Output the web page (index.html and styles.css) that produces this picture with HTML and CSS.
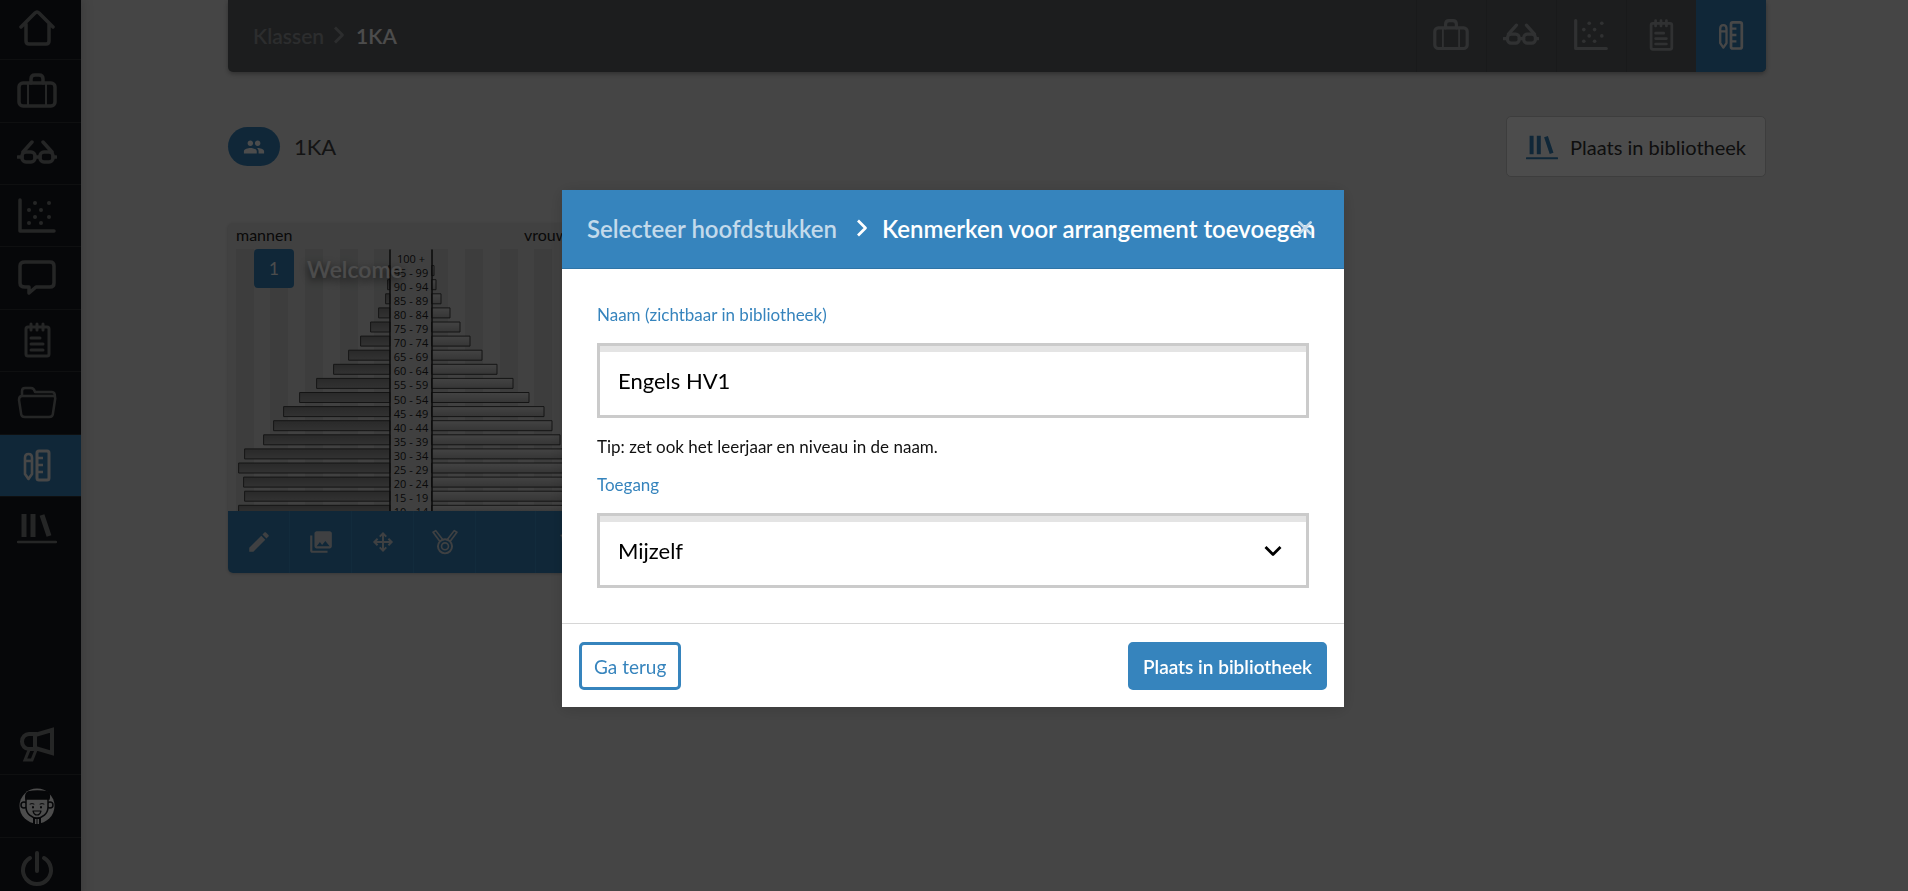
FILE: index.html
```html
<!DOCTYPE html>
<html lang="nl">
<head>
  <meta charset="UTF-8">
  <meta name="viewport" content="width=device-width, initial-scale=1">
  <title>1KA - Plaats in bibliotheek</title>
  <link rel="stylesheet" href="styles.css">
</head>
<body>
  <!-- Icons -->
  <svg class="sprite" aria-hidden="true">
    <symbol id="home" viewBox="0 0 40 40"><path d="M4 18 18 4q2-2 4 0l14 14M9 15v17q0 3 3 3h17q3 0 3-3V15"/></symbol>
    <symbol id="case" viewBox="0 0 40 40"><rect x="2" y="12" width="36" height="23" rx="4"/><path d="M14 12V8q0-4 4-4h4q4 0 4 4v4"/><path stroke-width="2" d="M11 13v22M29 13v22"/></symbol>
    <symbol id="glasses" viewBox="0 0 40 40"><rect x="5" y="19" width="13" height="10" rx="4"/><rect x="23" y="19" width="13" height="10" rx="4"/><path d="M1 24h4M18 24h5M36 24h3M6 19l9-10M26 9l9 10"/></symbol>
    <symbol id="chart" viewBox="0 0 40 40"><path d="M3 4v31h34"/><g fill="currentColor" stroke="none"><circle cx="18" cy="7" r="2"/><circle cx="32" cy="7" r="2"/><circle cx="12" cy="14" r="2"/><circle cx="24" cy="14" r="2"/><circle cx="18" cy="21" r="2"/><circle cx="32" cy="21" r="2"/><circle cx="12" cy="27" r="2"/><circle cx="24" cy="27" r="2"/></g></symbol>
    <symbol id="chat" viewBox="0 0 40 40"><path d="M8 4h25q4 0 4 4v17q0 4-4 4H19l-7 6v-6H8q-5 0-5-4V8q0-4 5-4Z"/></symbol>
    <symbol id="note" viewBox="0 0 40 40"><rect x="9" y="7" width="23" height="29" rx="2" stroke-width="3"/><path stroke-width="3" d="M14 4v6M20 4v6M26 4v6M14 18h9M14 24h12M14 30h12"/></symbol>
    <symbol id="folder" viewBox="0 0 40 40"><path stroke-width="2.5" d="M5 13V8q0-3 3-3h6q3 0 4 4h17q3 0 3 5M5 13h31q3 0 2 4l-2 13q0 4-4 4H8q-4 0-4-4L2 17q0-4 3-4Z"/></symbol>
    <symbol id="tools" viewBox="0 0 40 40"><path stroke-width="2.6" d="M8 13q0-4 3.500-4t3.500 4v16l-3.500 5L8 29ZM8 16h7"/><rect stroke-width="3" x="20" y="6" width="12" height="29" rx="2"/><path stroke-width="2.600" stroke-linecap="butt" d="M20 13h6M20 20h6M20 27h6"/></symbol>
    <symbol id="books" viewBox="0 0 40 40"><path stroke-width="5" stroke-linecap="butt" d="M7 6v23M16 6v23M25 7l7 21"/><path stroke-width="2.5" d="M1 34h38"/></symbol>
    <symbol id="horn" viewBox="0 0 40 40"><path stroke-width="4" stroke-linecap="butt" stroke-linejoin="miter" d="M18 10h-6a7 7.500 0 0 0 0 15h6ZM18 11l17-5v23l-17-5"/><path stroke-width="3" stroke-linejoin="miter" d="m12 26-4 10h7l4-10"/></symbol>
    <symbol id="power" viewBox="0 0 40 40"><path stroke-width="4" d="M13 9a14 14 0 1 0 14 0M20 4v18"/></symbol>
    <symbol id="avatar" viewBox="0 0 40 40">
      <circle cx="20" cy="20" r="17.500" fill="#fff" stroke="none"/>
      <g stroke="#17181e" stroke-width="1.500" fill="#fff">
        <circle cx="7" cy="19" r="3"/><circle cx="33" cy="19" r="3"/>
        <path stroke="none" fill="#17181e" d="M16 30h8v8h-8Z"/>
        <path stroke="none" d="M18 33h1.500v5H18ZM20.500 33H22v5h-1.500Z"/>
        <path d="M9 12v9c0 7 6 11 11 11s11-4 11-11v-9Z"/>
        <path fill="#17181e" d="M9 13q-1-5 2-7 9-2 20 0 2 2 1 7Z"/>
        <path stroke-width="1" d="M13 18q2-1 4 0M23 18q2-1 4 0"/>
        <path fill="none" stroke-width="2" d="M16 21v.5M24 21v.5"/>
        <path stroke-width="1.200" d="M16 25h8q-1 4-4 4t-4-4Z"/>
      </g>
    </symbol>
    <symbol id="people" viewBox="0 0 24 24"><path fill="currentColor" stroke="none" d="M16 11c1.700 0 3-1.300 3-3s-1.300-3-3-3-3 1.300-3 3 1.300 3 3 3ZM8 11c1.700 0 3-1.300 3-3S9.700 5 8 5 5 6.300 5 8s1.300 3 3 3ZM8 13c-2.300 0-7 1.200-7 3.500V19h14v-2.500C15 14.200 10.300 13 8 13ZM16 13h-1c1.200.8 2 2 2 3.500V19h6v-2.500c0-2.300-4.700-3.500-7-3.500Z"/></symbol>
    <symbol id="pencil" viewBox="0 0 24 24"><path fill="currentColor" stroke="none" d="M3 17.200V21h3.800L17.800 9.900l-3.700-3.700ZM20.700 7c.4-.4.4-1 0-1.400l-2.300-2.300c-.4-.4-1-.4-1.400 0l-1.800 1.800 3.700 3.700Z"/></symbol>
    <symbol id="images" viewBox="0 0 24 24"><path fill="currentColor" stroke="none" d="M22 16V4c0-1.100-.9-2-2-2H8c-1.100 0-2 .9-2 2v12c0 1.100.9 2 2 2h12c1.100 0 2-.9 2-2Zm-11-4 2 2.700 3-3.700 4 5H8ZM2 6v14c0 1.100.9 2 2 2h14v-2H4V6Z"/></symbol>
    <symbol id="move" viewBox="0 0 24 24"><path stroke-width="1.800" stroke-linecap="butt" stroke-linejoin="miter" d="M12 4v16M4 12h16M9 7l3-3 3 3M9 17l3 3 3-3M7 9l-3 3 3 3M17 9l3 3-3 3"/></symbol>
    <symbol id="medal" viewBox="0 0 24 24"><path stroke-width="1.500" d="m1 3 2.500-1.500L10 10M1 3l6 8M23 3l-2.500-1.500L14 10M23 3l-6 8"/><circle cx="12" cy="16" r="6.500" stroke-width="1.800"/><circle cx="12" cy="16" r="3.200" stroke-width="1.500"/></symbol>
    <symbol id="trash" viewBox="0 0 24 24"><path stroke-width="2" d="M6 6h12M9 6V3h6v3M7 6l1 15h8l1-15"/></symbol>
    <symbol id="chevron" viewBox="0 0 16 16"><path stroke-width="2.200" stroke-linecap="butt" d="m4 2 6 6-6 6"/></symbol>
    <symbol id="cross" viewBox="0 0 16 16"><path stroke-width="2.500" d="m3 3 10 10M13 3 3 13"/></symbol>
  </svg>

  <div class="app">
    <nav class="sidebar">
      <a href="#" aria-label="Home"><svg class="icon"><use href="#home"/></svg></a>
      <a href="#" aria-label="Vakken"><svg class="icon"><use href="#case"/></svg></a>
      <a href="#" aria-label="Nakijken"><svg class="icon"><use href="#glasses"/></svg></a>
      <a href="#" aria-label="Resultaten"><svg class="icon"><use href="#chart"/></svg></a>
      <a href="#" aria-label="Berichten"><svg class="icon"><use href="#chat"/></svg></a>
      <a href="#" aria-label="Planning"><svg class="icon"><use href="#note"/></svg></a>
      <a href="#" aria-label="Bestanden"><svg class="icon"><use href="#folder"/></svg></a>
      <a href="#" aria-label="Arrangeren" class="active"><svg class="icon"><use href="#tools"/></svg></a>
      <a href="#" aria-label="Bibliotheek" class="last"><svg class="icon"><use href="#books"/></svg></a>
      <a href="#" aria-label="Nieuws" class="bottom"><svg class="icon"><use href="#horn"/></svg></a>
      <a href="#" aria-label="Profiel"><svg class="icon"><use href="#avatar"/></svg></a>
      <a href="#" aria-label="Uitloggen" class="last"><svg class="icon"><use href="#power"/></svg></a>
    </nav>

    <main class="page">
      <header class="topbar">
        <div class="crumbs">
          <a href="#">Klassen</a>
          <svg class="chevron"><use href="#chevron"/></svg>
          <strong>1KA</strong>
        </div>
        <nav class="tabs">
          <a href="#" aria-label="Vakken"><svg class="icon"><use href="#case"/></svg></a>
          <a href="#" aria-label="Nakijken"><svg class="icon"><use href="#glasses"/></svg></a>
          <a href="#" aria-label="Resultaten"><svg class="icon"><use href="#chart"/></svg></a>
          <a href="#" aria-label="Planning"><svg class="icon"><use href="#note"/></svg></a>
          <a href="#" aria-label="Arrangeren" class="active"><svg class="icon"><use href="#tools"/></svg></a>
        </nav>
      </header>

      <div class="title-row">
        <span class="pill"><svg><use href="#people"/></svg></span>
        <h1>1KA</h1>
        <button class="library" type="button"><svg><use href="#books"/></svg>Plaats in bibliotheek</button>
      </div>

      <article class="card">
        <div class="cover">
          <svg id="pyramid" viewBox="0 0 372 288" aria-hidden="true">
            <defs>
              <linearGradient id="men" x2="0" y2="1"><stop stop-color="#8a8a8a"/><stop offset="1" stop-color="#a8a8a8"/></linearGradient>
              <linearGradient id="women" x2="0" y2="1"><stop stop-color="#e2e2e2"/><stop offset="1" stop-color="#b4b4b4"/></linearGradient>
            </defs>
          </svg>
          <div class="chapter"><span>1</span><h2>Welcome</h2></div>
        </div>
        <div class="actions">
          <button type="button" aria-label="Bewerken"><svg><use href="#pencil"/></svg></button>
          <button type="button" aria-label="Afbeelding"><svg><use href="#images"/></svg></button>
          <button type="button" aria-label="Verplaatsen"><svg><use href="#move"/></svg></button>
          <button type="button" aria-label="Beloning"><svg><use href="#medal"/></svg></button>
          <span></span>
          <button type="button" aria-label="Verwijderen"><svg><use href="#trash"/></svg></button>
        </div>
      </article>
    </main>
  </div>

  <!-- Modal -->
  <div class="overlay">
    <form class="modal" role="dialog" aria-label="Kenmerken voor arrangement toevoegen">
      <div class="modal-header">
        <a href="#">Selecteer hoofdstukken</a>
        <svg class="chevron"><use href="#chevron"/></svg>
        <strong>Kenmerken voor arrangement toevoegen</strong>
        <button class="close" type="button" aria-label="Sluiten"><svg><use href="#cross"/></svg></button>
      </div>
      <div class="modal-body">
        <label for="name">Naam (zichtbaar in bibliotheek)</label>
        <input type="text" id="name" value="Engels HV1">
        <p>Tip: zet ook het leerjaar en niveau in de naam.</p>
        <label for="access">Toegang</label>
        <div class="select">
          <select id="access">
            <option>Mijzelf</option>
          </select>
          <svg class="chevron"><use href="#chevron"/></svg>
        </div>
      </div>
      <div class="modal-footer">
        <button class="btn" type="button">Ga terug</button>
        <button class="btn primary" type="button">Plaats in bibliotheek</button>
      </div>
    </form>
  </div>

  <script>
    // age group, left end of the men bar, right end of the women bar
    const rows = [
      ["100 +", 162, 204], ["95 - 99", 161, 206], ["90 - 94", 160, 208], ["85 - 89", 158, 213],
      ["80 - 84", 151, 222], ["75 - 79", 143, 232], ["70 - 74", 133, 242], ["65 - 69", 121, 254],
      ["60 - 64", 106, 269], ["55 - 59", 89, 285], ["50 - 54", 72, 301], ["45 - 49", 56, 316],
      ["40 - 44", 46, 324], ["35 - 39", 36, 332], ["30 - 34", 17, 350], ["25 - 29", 11, 354],
      ["20 - 24", 16, 350], ["15 - 19", 17, 348], ["10 - 14", 11, 354]
    ];
    let svg = "";
    // background stripes
    for (const x of [8, 42, 77, 112, 146, 202, 237, 272, 306, 341]) {
      svg += `<rect class="stripe" x="${x}" y="26" width="18" height="262"/>`;
    }
    svg += '<rect class="middle" x="162" y="27" width="42" height="280"/>';
    rows.forEach(([label, left, right], i) => {
      const y = 28.5 + i * 14.1;
      svg += `<rect class="bar" fill="url(#men)" x="${left}" y="${y}" width="${162 - left}" height="10"/>`;
      svg += `<rect class="bar" fill="url(#women)" x="204" y="${y}" width="${right - 204}" height="10"/>`;
      svg += `<text class="age" x="183" y="${y + 11}">${label}</text>`;
    });
    svg += '<path class="axis" d="M162 27v261M204 27v261"/>';
    svg += '<text class="sex" x="8" y="18">mannen</text><text class="sex" x="296" y="18">vrouwen</text>';
    document.getElementById("pyramid").insertAdjacentHTML("beforeend", svg);
  </script>
</body>
</html>
```
FILE: styles.css
```css
* {
  box-sizing: border-box;
}
body {
  margin: 0;
  overflow: hidden;
  background: #e6e6e6;
  font-family: Lato, "Noto Sans", sans-serif;
  color: #333;
}
a {
  color: inherit;
  text-decoration: none;
}
strong {
  font-weight: 600;
}
button {
  font-family: inherit;
  cursor: pointer;
}
svg {
  fill: none;
  stroke: currentColor;
  stroke-width: 3.5;
  stroke-linecap: round;
  stroke-linejoin: round;
}
.sprite {
  display: none;
}
.app {
  display: flex;
  height: 100vh;
}

/* sidebar */
.sidebar {
  display: flex;
  flex-direction: column;
  flex: none;
  width: 81px;
  height: calc(100vh + 11px);
  margin-top: -2px;
  background: #17181e;
  color: #7d7f80;
  box-shadow: 0 0 12px rgba(0, 0, 0, 0.2);
}
.sidebar a {
  display: flex;
  flex: none;
  align-items: center;
  justify-content: center;
  height: 7vh;
  padding-right: 7px;
  border-bottom: 1px solid #303238;
}
.sidebar a.last {
  border-bottom: none;
}
.sidebar a.bottom {
  margin-top: auto;
}
.sidebar a.active {
  background: #3684bd;
  color: #eee;
}
.icon {
  width: 40px;
  height: 40px;
}

/* page */
.page {
  flex: 1;
  padding: 0 142px 0 147px;
}
.topbar {
  display: flex;
  justify-content: space-between;
  height: 72px;
  overflow: hidden;
  border-radius: 0 0 5px 5px;
  background: #5f6366;
  box-shadow: 0 2px 4px rgba(0, 0, 0, 0.3);
}
.crumbs {
  display: flex;
  align-items: center;
  gap: 6px;
  padding: 0 0 2px 25px;
  font-size: 21px;
  font-weight: 600;
  color: #94979a;
}
.crumbs strong {
  color: #fff;
}
.chevron {
  width: 20px;
  height: 20px;
}
.tabs {
  display: flex;
  color: #a2a5a8;
}
.tabs a {
  display: flex;
  align-items: center;
  justify-content: center;
  width: 70px;
  padding: 0 2px 2px 0;
  border-left: 1px solid #54585b;
}
.tabs .icon {
  width: 36px;
  height: 36px;
}
.tabs .active {
  border-color: #3684bd;
  background: #3684bd;
  color: #eee;
}
.title-row {
  display: flex;
  align-items: center;
  gap: 14px;
  margin: 44px 0 46px;
}
.pill {
  display: flex;
  align-items: center;
  justify-content: center;
  width: 52px;
  height: 39px;
  border-radius: 20px;
  background: #3684bd;
  color: #fff;
}
.pill svg {
  width: 22px;
  height: 22px;
}
h1 {
  margin: 0;
  font-size: 22px;
  font-weight: normal;
  color: #444;
}
.library {
  display: flex;
  align-items: center;
  gap: 12px;
  height: 61px;
  margin-left: auto;
  padding: 0 19px;
  border: 1px solid #ccc;
  border-radius: 5px;
  background: #fff;
  font-size: 20px;
  color: #333;
}
.library svg {
  width: 32px;
  height: 32px;
  color: #3684bd;
}

/* chapter card */
.card {
  width: 372px;
  overflow: hidden;
  border-radius: 5px;
  background: #dadada;
  box-shadow: 0 1px 3px rgba(0, 0, 0, 0.2);
}
.cover {
  position: relative;
  height: 288px;
}
#pyramid {
  display: block;
  width: 372px;
  height: 288px;
}
.stripe {
  fill: #cbcdcc;
  stroke: none;
}
.middle {
  fill: #d8d8d8;
  stroke: none;
}
.bar {
  stroke: #444;
  stroke-width: 1;
}
.axis {
  stroke: #222;
  stroke-width: 1.5;
}
.age {
  fill: #222;
  stroke: none;
  font-family: "Open Sans", sans-serif;
  font-size: 11px;
  font-stretch: normal;
  text-anchor: middle;
}
.sex {
  fill: #222;
  stroke: none;
  font-size: 16px;
}
.chapter {
  position: absolute;
  top: 26px;
  left: 26px;
  display: flex;
  align-items: center;
  gap: 13px;
}
.chapter span {
  width: 40px;
  border-radius: 4px;
  background: #3684bd;
  color: #fff;
  font-size: 17px;
  line-height: 39px;
  text-align: center;
}
.chapter h2 {
  margin: 0;
  color: #fff;
  font-size: 23px;
  font-weight: 600;
  text-shadow: 0 3px 8px rgba(0, 0, 0, 0.7);
}
.actions {
  display: grid;
  grid-template-columns: repeat(4, 62px) 60px 1fr;
  height: 62px;
  background: #3684bd;
}
.actions > * {
  display: flex;
  align-items: center;
  justify-content: center;
  padding: 0;
  border: none;
  border-right: 1px solid #3f90ca;
  background: none;
  color: #d3d8dc;
}
.actions svg {
  width: 26px;
  height: 26px;
}

/* modal */
.overlay {
  position: fixed;
  inset: 0;
  display: flex;
  align-items: center;
  justify-content: center;
  padding: 6px 2px 0 0;
  background: rgba(0, 0, 0, 0.7);
}
.modal {
  width: 782px;
  background: #fff;
  color: #111;
  box-shadow: 0 2px 16px rgba(0, 0, 0, 0.15);
}
.modal-header {
  position: relative;
  display: flex;
  align-items: center;
  height: 79px;
  padding: 0 25px 2px;
  border-bottom: 1px solid #2f74a6;
  background: #3684bd;
  color: #fff;
  font-size: 24px;
  font-weight: 600;
  white-space: nowrap;
}
.modal-header a {
  color: #c3daeb;
}
.modal-header .chevron {
  flex: none;
  margin: 0 9px 0 16px;
}
.close {
  position: absolute;
  right: 30px;
  padding: 0;
  border: none;
  background: none;
  color: #c3daeb;
  line-height: 0;
}
.close svg {
  width: 18px;
  height: 18px;
}
.modal-body {
  padding: 35px;
}
.modal-body label {
  display: block;
  margin-bottom: 17px;
  color: #3684bd;
  font-size: 17px;
  line-height: 22px;
}
.modal-body p {
  margin: 18px 0 16px;
  font-size: 17px;
  line-height: 22px;
}
.modal-body input,
.modal-body select {
  display: block;
  width: 100%;
  height: 75px;
  padding: 0 18px;
  border: 3px solid #cbcbcb;
  border-radius: 0;
  background: #fff;
  box-shadow: inset 0 6px #e4e4e4;
  color: #000;
  font-family: inherit;
  font-size: 22px;
  appearance: none;
}
.select {
  position: relative;
}
.select .chevron {
  position: absolute;
  top: 29px;
  right: 26px;
  color: #000;
  transform: rotate(90deg);
  pointer-events: none;
}
.modal-footer {
  display: flex;
  justify-content: space-between;
  padding: 18px 17px 17px;
  border-top: 1px solid #d6d6d6;
}
.btn {
  height: 48px;
  padding: 0 12px;
  border: 3px solid #3684bd;
  border-radius: 5px;
  background: #fff;
  color: #3684bd;
  font-size: 19px;
}
.btn.primary {
  background: #3684bd;
  color: #fff;
  font-weight: 600;
}
```
